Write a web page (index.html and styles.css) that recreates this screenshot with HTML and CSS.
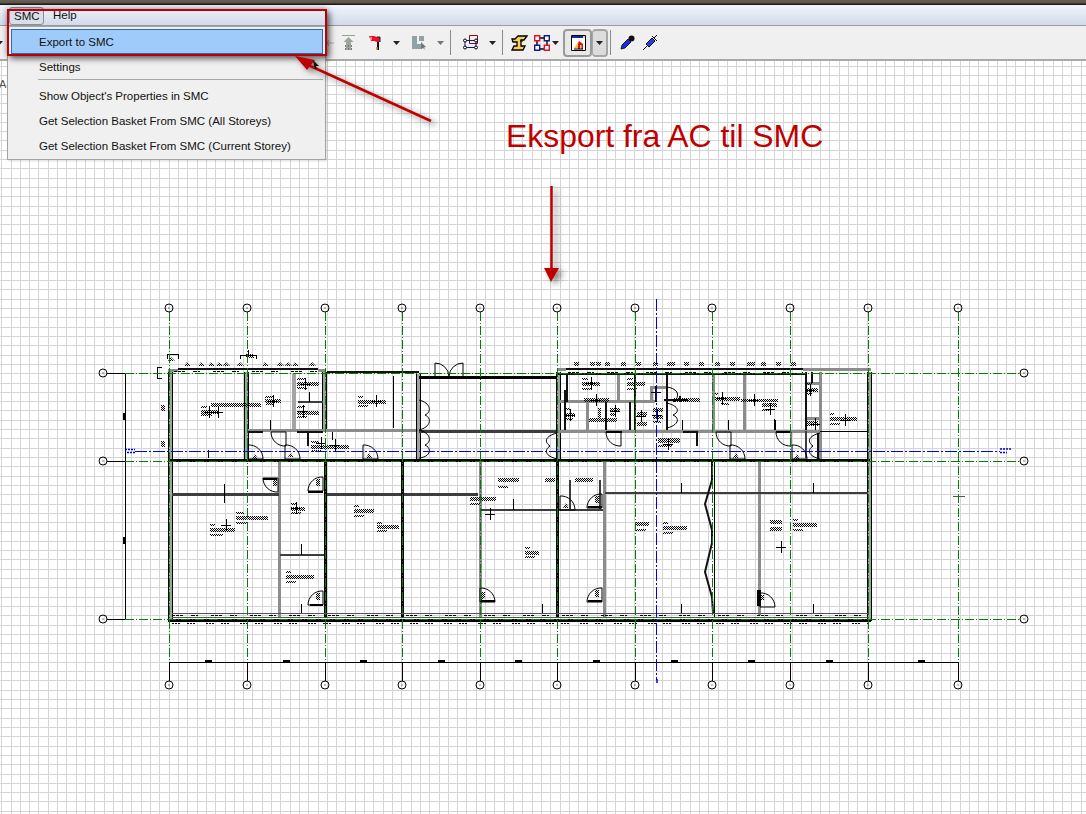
FILE: index.html
```html
<!DOCTYPE html>
<html lang="en">
<head>
<meta charset="utf-8">
<title>SMC export</title>
<link rel="stylesheet" href="styles.css">
</head>
<body>
<div class="app">
  <div class="photo-strip"></div>
  <nav class="menubar">
    <span class="menu-title menu-open">SMC</span>
    <span class="menu-title">Help</span>
  </nav>
  <div class="toolbar">
    <svg class="tri t0" width="7" height="4" viewBox="0 0 7 4"><path d="M0 0h7L3.5 4z"/></svg>
    <svg class="t1" width="8" height="6" viewBox="0 0 8 6"><path d="M0 3h8M3 0l-2 3 2 3" fill="none" stroke="#b9a9a9"/></svg>
    <svg class="t2" width="13" height="16" viewBox="0 0 13 16"><path d="M0 .5h13" stroke="#9a9f9a"/><path d="M6.5 2l5 5H9v8H4V7H1.500z" fill="#9da49b"/><path d="M3.500 10v6M6.500 10v6M9.500 10v6" stroke="#777" stroke-dasharray="2 1"/></svg>
    <svg class="t3" width="13" height="16" viewBox="0 0 13 16"><path d="M0 1h5l3 1h3v5H8L5 6H2z" fill="#e8102a"/><path d="M2 2v3" stroke="#fff"/><path d="M8 2h3v5" fill="none" stroke="#222"/><path d="M9 7v8" stroke="#111" stroke-width="2"/><path d="M8 12v3" stroke="#c28a20" stroke-width="1.500"/></svg>
    <svg class="tri t4" width="7" height="4" viewBox="0 0 7 4"><path d="M0 0h7L3.500 4z"/></svg>
    <svg class="t5" width="15" height="14" viewBox="0 0 15 14"><path d="M0 0h5v8h5v5H0z" fill="#8ea3a8"/><path d="M7 0h5v5H7z" fill="#8ea3a8"/><path d="M9 6l5 5-2 .5 1 2.500-2-2-2 1z" fill="#767676"/></svg>
    <svg class="tri gray t6" width="7" height="4" viewBox="0 0 7 4"><path d="M0 0h7L3.500 4z"/></svg>
    <span class="sep t7"></span>
    <svg class="t8" width="16" height="15" viewBox="0 0 16 15"><path d="M6.500.5h8v8h-8z" fill="none" stroke="#7a1010"/><path d="M2 5.500h11v7H2z" fill="none" stroke="#0b1a8c"/><g fill="#fff" stroke="#000"><circle cx="2" cy="5.500" r="1.500"/><circle cx="13" cy="5.500" r="1.500"/><circle cx="2" cy="12.500" r="1.500"/><circle cx="13" cy="12.500" r="1.500"/></g></svg>
    <svg class="tri t9" width="7" height="4" viewBox="0 0 7 4"><path d="M0 0h7L3.500 4z"/></svg>
    <span class="sep t10"></span>
    <svg class="t11" width="17" height="16" viewBox="0 0 17 16"><path d="M1 4h3l3-3h9l-3 4h-3v6h4l-2 4H1l2-4h3V7H2z" fill="#f9cf5b" stroke="#000" stroke-width="1.300"/><path d="M9 6h3" stroke="#000"/></svg>
    <svg class="t12" width="16" height="16" viewBox="0 0 16 16"><path d="M4 3h8M3 5v7M13 5v7M5 14h6" stroke="#000" stroke-width="1.400"/><path d="M.7.700h5v5h-5zM10.300 10.300h5v5h-5z" fill="#fff" stroke="#e01020" stroke-width="1.400"/><path d="M10.300.700h5v5h-5zM.7 10.300h5v5h-5z" fill="#fff" stroke="#101a90" stroke-width="1.400"/></svg>
    <svg class="tri t13" width="7" height="4" viewBox="0 0 7 4"><path d="M0 0h7L3.500 4z"/></svg>
    <div class="split t14">
      <span class="split-main">
        <svg width="15" height="16" viewBox="0 0 15 16"><path d="M.5.500h14v15H.5z" fill="#fff" stroke="#000"/><path d="M1 1h13v2H1z" fill="#1a2a9c"/><path d="M12 1h2v2h-2z" fill="#f2d84a"/><path d="M3 13l5-7 4 3v4z" fill="#f0c040"/><path d="M8 6l4 3v5H7V9z" fill="#d81818"/><path d="M9 10h1.500v4H9z" fill="#f3d060"/><path d="M3 14h9" stroke="#000"/></svg>
      </span>
      <span class="split-arrow"><svg class="tri" width="7" height="4" viewBox="0 0 7 4"><path d="M0 0h7L3.500 4z"/></svg></span>
    </div>
    <span class="sep t15"></span>
    <svg class="t16" width="15" height="15" viewBox="0 0 15 15"><path d="M1 14l1-4 6-6 3 3-6 6z" fill="#1a2ee0" stroke="#000" stroke-width=".8"/><circle cx="11.500" cy="3.500" r="3" fill="#111"/></svg>
    <svg class="t17" width="15" height="15" viewBox="0 0 15 15"><path d="M0 15l4-4" stroke="#000"/><path d="M3 9l6-6 3 3-6 6z" fill="#2b3ee0" stroke="#000" stroke-width=".9"/><path d="M9 1l5 5M11 3l3-3" stroke="#000" fill="none"/></svg>
  </div>

  <main class="canvas">
    <svg class="plan" width="1086" height="753" viewBox="0 61 1086 753">
      <defs>
        <pattern id="h" width="2" height="2" patternUnits="userSpaceOnUse">
          <path d="M0 0h1v1H0zM1 1h1v1H1z" fill="#000"/>
        </pattern>
        <path id="wo" d="M170 372V621M869.500 372V621M246.500 372V461M324.500 372V430M418.500 374V460M558.500 372V461"/>
        <g id="cross"><path d="M-5 0H5M0-6V6"/></g>
        <g id="dr"><path d="M0 0H15M0 0V-14A14 14 0 0 1 15 0"/></g>
        <g id="bub"><circle r="4"/><path d="M-.5 0h1"/></g>
      </defs>

      <path class="grid grid-v" d="M1.200 437H1086"/>
      <path class="grid grid-h" d="M543 56.680V814"/>

      <!-- dimension lines -->
      <path class="k crisp" d="M107 373.500H125M107 461.500H125M107 619.500H125M125.500 373V620M169 662.500H958M169.500 662V681M247.500 662V681M325.500 662V681M402.500 662V681M480.500 662V681M557.500 662V681M635.500 662V681M712.500 662V681M790.500 662V681M868.500 662V681M958.500 662V681"/>
      <path class="crisp" fill="#000" d="M123 413h3v7h-3zM123 537h3v7h-3zM205 660h7v2h-7zM283 660h7v2h-7zM360 660h7v2h-7zM438 660h7v2h-7zM515 660h7v2h-7zM593 660h7v2h-7zM671 660h7v2h-7zM748 660h7v2h-7zM826 660h7v2h-7zM918 660h7v2h-7z"/>

      <!-- walls -->
      <g class="crisp">
        <use href="#wo" class="wall-out"/>
        <use href="#wo" class="wall-in"/>
        <path class="gw" d="M279 461V617M604 461V617M759 461V615M480.500 461V617M713 374V430M744 374V430M618.500 374V402M587.500 402V430M820.500 372V460"/>
        <path class="gw4" d="M294 374V430"/>
        <path class="gw" d="M558 369.500H566M168 370H178M318 370H326M803 369.500H871M651.500 386V402M651 387H667M558 401.500H655M558 431H820M247 430.500H418M806 418H820M806 383H820"/>
        <path class="dk" d="M172 494.500H279M280 555H325M326 494.500H478M481 510H603M605 493H868M419 431.500H556M298 402H323M570 510V480M600 510V480M806 431V458"/>
        <path class="bk" d="M325 461V617M402.500 461V617M557.500 461V617M168 460.500H870M419 377H557M168 620.500H871"/>
        <path class="bk2" d="M178 369H318M327 372H419M566 369H803M567 374V402M635 374V430M666.500 375V430M805.500 372V430M812 372V383M558 373.500H805M565 390V430M297 431.500H323M247 431.500H263M307.500 431V446M664 399.500H688M680 396V402M656 386V402M630 402V430M605.500 402V430M696.500 431V446M683 431.500H696M818 433V459M758.500 590V606"/>
        <path class="k" d="M820 431.500H868M393.500 376V428M416 376V458M714.500 461V617M224.500 484V503M301.500 544V555M301.500 604V613M513.500 499V510M542.500 604V613M681.500 483V493M681.500 604V613M813.500 483V493M813.500 604V613M774.500 419V430M208.500 450V458M270.500 420V430M309.500 392V402M332.500 432V440M728.500 420V430M775.500 420V430M682.500 420V430"/>
        <path class="tick-gray" d="M172 613.500H868M172 617.500H868M953 496.500H965"/>
        <path class="dots" d="M172 623.500H870"/>
        <path class="dots alt" d="M172 615H868"/>
        <path class="dots alt" d="M174 371.500H326"/>
        <path class="dots alt" d="M568 372H803"/>
      </g>
      <path class="zig" d="M712 461L712 480L705 504L712 530L712 543L705 572L712 597L713 613"/>

      <!-- doors -->
      <g class="door">
        <use href="#dr" transform="translate(248 459)"/>
        <use href="#dr" transform="translate(285 459)"/>
        <use href="#dr" transform="translate(363 459)"/>
        <use href="#dr" transform="translate(730 459)"/>
        <use href="#dr" transform="translate(792 459)"/>
        <use href="#dr" transform="translate(480 602)"/>
        <use href="#dr" transform="matrix(-1 0 0 1 323 605)"/>
        <use href="#dr" transform="matrix(-1 0 0 1 602 602)"/>
        <use href="#dr" transform="matrix(-1 0 0 1 602 508)"/>
        <use href="#dr" transform="matrix(-1 0 0 1 323 491)"/>
        <use href="#dr" transform="matrix(-1 0 0 -1 286 432)"/>
        <use href="#dr" transform="matrix(-1 0 0 -1 621 432)"/>
        <use href="#dr" transform="matrix(-1 0 0 -1 731 432)"/>
        <use href="#dr" transform="matrix(-1 0 0 -1 791 432)"/>
        <use href="#dr" transform="matrix(-1 0 0 -1 278 478)"/>
        <use href="#dr" transform="translate(760 607)"/>
        <use href="#dr" transform="translate(560 510)"/>
        <path d="M435 376V363A14 14 0 0 1 449 376M463 376V363A14 14 0 0 0 449 376"/>
        <path d="M419 400C431 403 432 412 425 415C432 418 431 427 419 430M419 430C431 433 432 442 425 445C432 448 431 457 419 458"/>
        <path d="M557 433C545 436 544 442 550 446C544 450 545 456 557 459"/>
        <path d="M667 387C679 389 680 396 674 402M667 403C679 406 680 412 673 415C680 418 679 425 667 428"/>
        <path d="M820 433C808 436 807 442 813 446C807 450 808 456 820 459"/>
      </g>
      <path class="crisp" fill="#000" d="M757 590h4v16h-4zM310 604h13v2h-13zM588 600h14v2h-14zM588 506h14v2h-14zM480 600h15v2h-15zM308 491h15v2h-15zM263 478h14v2h-14zM606 431h16v2h-16zM776 431h14v2h-14z"/>

      <!-- greeked labels -->
      <g fill="url(#h)">
        <path d="M211 403h50v4h-50zM201 406h6v2h-6zM201 410h18v4h-18zM201 414h11v2h-11zM265 396h8v2h-8zM265 399h16v4h-16zM266 403h8v2h-8zM297 378h8v2h-8zM297 382h22v4h-22zM297 387h10v2h-10zM297 406h8v2h-8zM297 411h22v4h-22zM297 416h10v2h-10zM358 396h5v2h-5zM358 400h28v4h-28zM358 405h10v2h-10zM311 441h8v2h-8zM311 445h38v4h-38zM311 450h10v2h-10zM161 405h4v6h-4zM161 441h4v6h-4z"/>
        <path d="M210 524h5v2h-5zM210 528h25v4h-25zM210 534h13v2h-13zM236 512h8v2h-8zM236 516h32v4h-32zM236 522h12v2h-12zM291 503h5v2h-5zM291 507h14v4h-14zM291 512h10v2h-10zM354 505h5v2h-5zM354 509h20v4h-20zM354 515h10v2h-10zM377 522h5v2h-5zM377 525h22v4h-22zM377 530h10v2h-10zM286 571h5v2h-5zM286 575h28v4h-28zM286 581h10v2h-10z"/>
        <path d="M470 497h26v4h-26zM470 503h10v2h-10zM498 478h21v4h-21zM498 486h10v2h-10zM525 547h5v2h-5zM525 551h14v4h-14zM525 556h10v2h-10zM636 522h13v4h-13zM636 529h10v2h-10zM663 522h5v2h-5zM663 526h24v4h-24zM663 532h10v2h-10zM575 478h18v4h-18zM545 478h10v4h-10zM770 520h12v4h-12zM770 527h12v4h-12zM793 519h5v2h-5zM793 523h24v4h-24zM793 529h10v2h-10zM830 413h4v2h-4zM830 417h27v4h-27zM830 423h10v2h-10z"/>
        <path d="M807 383h5v2h-5zM807 388h11v4h-11zM807 393h5v2h-5zM806 421h12v5h-12zM741 399h37v3h-37zM762 403h15v4h-15zM762 409h8v2h-8zM715 393h3v2h-3zM715 397h25v4h-25zM721 403h8v2h-8zM582 378h6v2h-6zM582 382h18v4h-18zM582 388h10v2h-10zM627 378h6v2h-6zM627 382h18v4h-18zM627 388h10v2h-10zM584 398h25v4h-25zM565 408h5v2h-5zM565 413h10v4h-10zM565 418h8v2h-8zM589 418h28v4h-28zM610 408h10v3h-10zM610 413h6v3h-6zM637 412h10v4h-10zM637 422h10v4h-10zM653 408h10v4h-10zM653 416h10v3h-10zM653 421h8v2h-8zM673 398h27v4h-27zM658 438h22v5h-22zM658 445h14v2h-14zM598 408h3v14h-3z"/>
        <path d="M252 459l3-5 3 5zM288 457l3-4 3 4zM366 458l3-5 3 5zM733 458l3-5 3 5zM794 459l3-5 3 5zM563 508l3-5 3 5zM481 600l4-2v-6h-4zM316 600h4v-7h-4zM595 597h4v-7h-4zM595 503h4v-7h-4zM316 486h4v-7h-4zM273 486h4v-7h-4zM761 600h3v-5h-3z"/>
        <path d="M184 366l3-4 4 4zM198 366l3-4 4 4zM208 366l3-4 4 4zM216 366l3-4 4 4zM223 366l3-4 4 4zM237 366l3-4 4 4zM262 366l3-4 4 4zM277 366l3-4 4 4zM285 366l3-4 4 4zM292 366l3-4 4 4zM309 366l3-4 4 4zM168 361l3-4 4 4zM246 358h8v-4h-8z"/>
        <path d="M574 362h5v4h-5zM590 362h5v4h-5zM596 362h5v4h-5zM605 362h5v4h-5zM621 362h5v4h-5zM636 362h5v4h-5zM653 362h5v4h-5zM667 362h8v4h-8zM684 362h5v4h-5zM699 362h5v4h-5zM715 362h5v4h-5zM730 362h5v4h-5zM747 362h8v4h-8zM761 362h5v4h-5zM776 362h5v4h-5zM791 362h5v4h-5z"/>
      </g>
      <path class="hatch-blue" d="M125 449.500h10M127 452.500h8M1000 449h11M1000 452.500h7M656 680h2M656 682h2"/>
      <g class="xs">
        <use href="#cross" transform="translate(209 412)"/>
        <use href="#cross" transform="translate(218 412)"/>
        <use href="#cross" transform="translate(273 401)"/>
        <use href="#cross" transform="translate(305 384)"/>
        <use href="#cross" transform="translate(303 411)"/>
        <use href="#cross" transform="translate(376 401)"/>
        <use href="#cross" transform="translate(321 443)"/>
        <use href="#cross" transform="translate(335 445)"/>
        <use href="#cross" transform="translate(226 525)"/>
        <use href="#cross" transform="translate(296 508)"/>
        <use href="#cross" transform="translate(490 514)"/>
        <use href="#cross" transform="translate(781 547)"/>
        <use href="#cross" transform="translate(845 420)"/>
        <use href="#cross" transform="translate(810 390)"/>
        <use href="#cross" transform="translate(754 400)"/>
        <use href="#cross" transform="translate(770 409)"/>
        <use href="#cross" transform="translate(722 398)"/>
        <use href="#cross" transform="translate(591 383)"/>
        <use href="#cross" transform="translate(596 400)"/>
        <use href="#cross" transform="translate(570 415)"/>
        <use href="#cross" transform="translate(615 411)"/>
        <use href="#cross" transform="translate(641 416)"/>
        <use href="#cross" transform="translate(657 415)"/>
        <use href="#cross" transform="translate(668 444)"/>
        <use href="#cross" transform="translate(656 392)"/>
        <use href="#cross" transform="translate(815 424)"/>
      </g>
      <path class="k crisp" d="M157 367.500h5M157 378.500h5M157.500 367V379M167 358.500V354.500H178V358.500M240 358.500V355.500H256V358.500M248 355V350"/>

      <!-- axis lines -->
      <path class="axis crisp" d="M169.500 312V660M247.500 312V660M325.500 312V660M402.500 312V660M480.500 312V660M557.500 312V660M635.500 312V660M712.500 312V660M790.500 312V660M868.500 312V660M958.500 312V662M125 373.500H1020M125 461.500H1020M125 619.500H1020"/>
      <path class="axis-blue crisp" d="M656.500 299V680M135 451.500H1000"/>

      <!-- bubbles -->
      <g class="bubbles">
        <use href="#bub" x="169" y="308"/><use href="#bub" x="247" y="308"/><use href="#bub" x="325" y="308"/><use href="#bub" x="402" y="308"/><use href="#bub" x="480" y="308"/><use href="#bub" x="557" y="308"/><use href="#bub" x="635" y="308"/><use href="#bub" x="712" y="308"/><use href="#bub" x="790" y="308"/><use href="#bub" x="868" y="308"/><use href="#bub" x="958" y="308"/>
        <use href="#bub" x="169" y="685"/><use href="#bub" x="247" y="685"/><use href="#bub" x="325" y="685"/><use href="#bub" x="402" y="685"/><use href="#bub" x="480" y="685"/><use href="#bub" x="557" y="685"/><use href="#bub" x="635" y="685"/><use href="#bub" x="712" y="685"/><use href="#bub" x="790" y="685"/><use href="#bub" x="868" y="685"/><use href="#bub" x="958" y="685"/>
        <use href="#bub" x="103" y="373"/><use href="#bub" x="103" y="461"/><use href="#bub" x="103" y="619"/>
        <use href="#bub" x="1024" y="373"/><use href="#bub" x="1024" y="461"/><use href="#bub" x="1024" y="619"/>
      </g>
      <text class="stray" x="-1" y="88">A</text>
    </svg>
  </main>

  <!-- open SMC menu -->
  <div class="dropdown">
    <div class="item item-active">Export to SMC</div>
    <div class="item">Settings</div>
    <div class="divider"></div>
    <div class="item">Show Object's Properties in SMC</div>
    <div class="item">Get Selection Basket From SMC (All Storeys)</div>
    <div class="item">Get Selection Basket From SMC (Current Storey)</div>
  </div>

  <!-- annotations on top of the screenshot -->
  <div class="callout-box"></div>
  <h1 class="callout-text">Eksport fra AC til SMC</h1>
  <svg class="callout-arrows" width="1086" height="814" viewBox="0 0 1086 814">
    <path d="M431 121L306 64" stroke="#c00000" stroke-width="2.500" fill="none"/>
    <path d="M295 56L315 60L307 70z" fill="#c00000"/>
    <path d="M551.500 186V268" stroke="#c00000" stroke-width="2.500" fill="none"/>
    <path d="M544 268H559L551 282z" fill="#c00000"/>
  </svg>
  <svg class="cursor" width="6" height="9" viewBox="0 0 6 9"><path d="M0 0l6 6-3 0 1 3-2 0-1-3z" fill="#111"/></svg>
</div>
</body>
</html>
```

FILE: styles.css
```css
* { box-sizing: border-box; }
html, body { margin: 0; height: 100%; }
body { overflow: hidden; background: #fff; font-family: "Liberation Sans", Arial, sans-serif; }
.app { position: relative; width: 1086px; height: 814px; overflow: hidden; display: flex; flex-direction: column; }

.photo-strip { height: 5px; background: linear-gradient(#6a5f55 0, #5f5448 60%, #1d1b1a 80%, #1d1b1a 100%); flex: none; }

.menubar { height: 21px; flex: none; display: flex; align-items: center; gap: 5px; padding: 1px 0 0 9px; font-size: 11.500px; color: #111; background: linear-gradient(#f1f4fa, #d3daec); border-bottom: 1px solid #9b9b9b; }
.menu-title { padding: 0 4px; line-height: 17px; }
.menu-open { width: 35px; height: 18px; padding-left: 4px; border: 1px solid #8b8f94; border-radius: 3px; background: #d9deea; }

.toolbar { height: 35px; flex: none; display: flex; align-items: center; background: #f0f0f0; border-bottom: 2px solid #a9a9a9; }
.toolbar svg { display: block; flex: none; }
.tri path { fill: #222; }
.tri.gray path { fill: #777; }
.sep { display: block; width: 1px; height: 25px; background: #8a8a8a; flex: none; }
.t0 { margin-left: -4px; }
.t1 { margin-left: 323px; }
.t2 { margin-left: 8px; }
.t3 { margin-left: 14px; }
.t4 { margin-left: 11px; }
.t5 { margin-left: 12px; }
.t6 { margin-left: 10px; }
.t7 { margin-left: 6px; }
.t8 { margin-left: 12px; }
.t9 { margin-left: 10px; }
.t10 { margin-left: 6px; }
.t11 { margin-left: 8px; }
.t12 { margin-left: 6px; }
.t13 { margin-left: 2px; }
.t14 { margin-left: 4px; }
.t15 { margin-left: 2px; }
.t16 { margin-left: 9px; }
.t17 { margin-left: 8px; }

.split { display: flex; height: 28px; flex: none; }
.split-main { width: 29px; display: flex; align-items: center; justify-content: center; padding-left: 2px; background: #e8e8e8; border: 2px solid #9a9a9a; border-radius: 4px; }
.split-arrow { width: 16px; display: flex; align-items: center; justify-content: center; background: #dcdcdc; border: 2px solid #a6a6a6; border-left-width: 1px; border-radius: 4px; }

.canvas { flex: 1; background: #fff; overflow: hidden; }
.plan { display: block; }
.grid { fill: none; stroke: #d5d5d5; stroke-dasharray: 1 8.305; shape-rendering: crispEdges; }
.grid-v { stroke-width: 753; }
.grid-h { stroke-width: 1086; stroke-dasharray: 1 8.310; }
.crisp { shape-rendering: crispEdges; }
.k { fill: none; stroke: #000; stroke-width: 1; }
.tick-gray { fill: none; stroke: #555; stroke-width: 1; }
.wall-out { fill: none; stroke: #000; stroke-width: 5; }
.wall-in { fill: none; stroke: #a2a2a2; stroke-width: 3; }
.gw { fill: none; stroke: #8c8c8c; stroke-width: 3; }
.gw4 { fill: none; stroke: #a5a5a5; stroke-width: 4; }
.dk { fill: none; stroke: #3d3d3d; stroke-width: 2.500; }
.bk { fill: none; stroke: #000; stroke-width: 3; }
.bk2 { fill: none; stroke: #111; stroke-width: 2; }
.dots { fill: none; stroke: #000; stroke-width: 1; stroke-dasharray: 2 1 2 1 2 7 2 1 2 1 2 11; }
.dots.alt { stroke-width: 1; stroke-dasharray: 3 1 3 1 3 8 4 1 2 13; }
.zig { fill: none; stroke: #111; stroke-width: 2; }
.door { fill: none; stroke: #000; stroke-width: 1; }
.xs { fill: none; stroke: #000; stroke-width: 1; shape-rendering: crispEdges; }
.hatch-blue { fill: none; stroke: #0000e0; stroke-width: 1.500; stroke-dasharray: 2 1; }
.axis { fill: none; stroke: #008000; stroke-width: 1; stroke-dasharray: 9 2 1 2; }
.axis-blue { fill: none; stroke: #0000f0; stroke-width: 1; stroke-dasharray: 12 2 2 2; }
.bubbles { fill: none; stroke: #000; stroke-width: 1; }
.stray { font: 11px "Liberation Sans", Arial, sans-serif; fill: #555; }

.dropdown { position: absolute; left: 7px; top: 26px; width: 319px; height: 134px; padding: 2px 2px 0 3px; background: #f0f0f0; border: 1px solid #a3a3a3; font-size: 11.500px; color: #111; box-shadow: 1px 1px 2px rgba(0, 0, 0, .15); }
.item { height: 25px; line-height: 25px; padding-left: 27px; border: 1px solid transparent; }
.item-active { background: #9fcbfb; border-color: #2a6db0; }
.divider { height: 1px; margin: 0 0 3px 27px; background: #a8a8a8; }

.callout-box { position: absolute; left: 7px; top: 9px; width: 320px; height: 47px; border: 2px solid #c00000; box-shadow: 3px 3px 6px rgba(0, 0, 0, .55), -1px -1px 5px rgba(0, 0, 0, .25); }
.callout-text { position: absolute; left: 506px; top: 118px; margin: 0; font-size: 31.900px; line-height: 36px; font-weight: 400; color: #c00000; white-space: nowrap; }
.callout-arrows { position: absolute; left: 0; top: 0; pointer-events: none; filter: drop-shadow(4px 3px 3px rgba(0, 0, 0, .5)); }
.cursor { position: absolute; left: 313px; top: 60px; }
```
